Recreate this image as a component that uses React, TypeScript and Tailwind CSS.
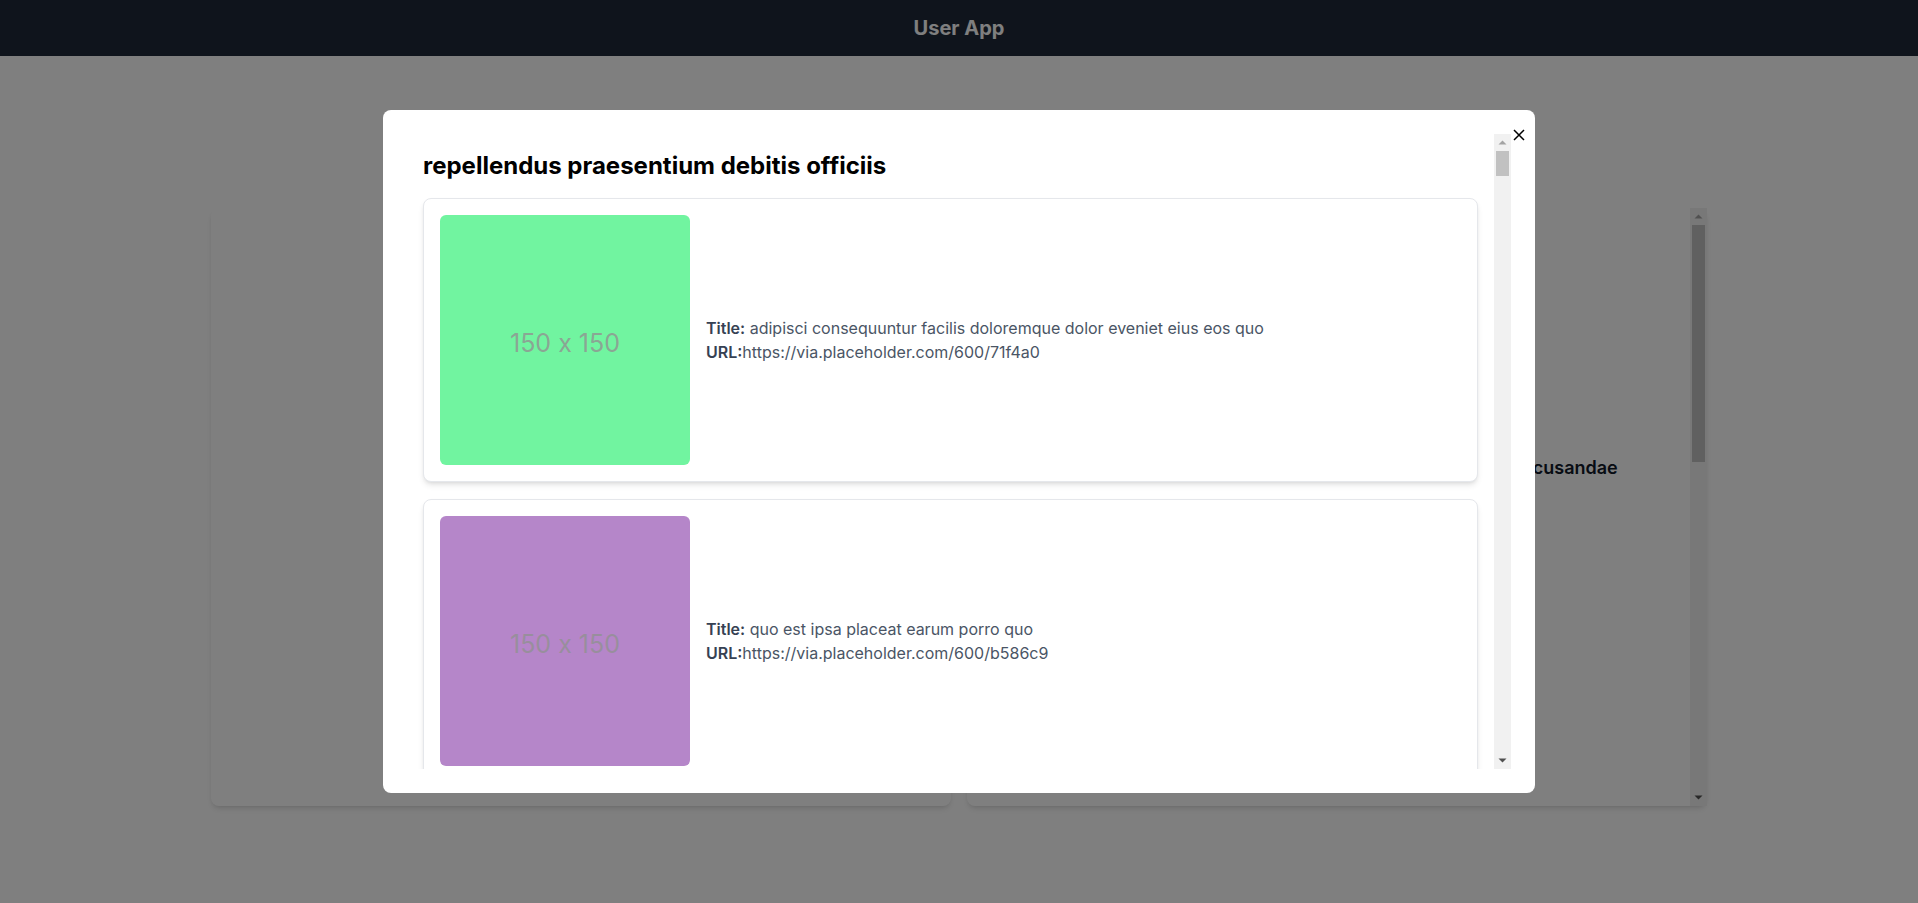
import React from 'react'

type Photo = { title: string; color: string }

const firstPhotos: Photo[] = [
  { title: 'adipisci consequuntur facilis doloremque dolor eveniet eius eos quo', color: '71f4a0' },
  { title: 'quo est ipsa placeat earum porro quo', color: 'b586c9' },
  { title: 'sit voluptatem sit minima veritatis rerum', color: '4f6a85' },
  { title: 'nihil aut dolores dolore quisquam ullam', color: 'd6a1e3' },
  { title: 'ut voluptatem dolores eos et', color: '27d1c0' },
]

const words = [
  'aut', 'rerum', 'voluptas', 'quia', 'omnis', 'dolore', 'natus', 'eius', 'esse', 'magni',
  'odio', 'labore', 'nulla', 'amet', 'velit', 'illum', 'saepe', 'ipsam', 'facere', 'minus',
]

// fill up the album to 50 photos
const photos: Photo[] = Array.from({ length: 50 }, (_, i) => {
  if (i < firstPhotos.length) return firstPhotos[i]
  const n = 3 + (i % 5)
  const title = Array.from({ length: n }, (_, k) => words[(i * 7 + k * 3) % words.length]).join(' ')
  const color = (((i + 1) * 2654435761) >>> 8).toString(16).padStart(6, '0').slice(-6)
  return { title, color }
})

const albums = [
  'quidem molestiae enim',
  'sunt qui excepturi placeat culpa',
  'omnis laborum odio',
  'non esse culpa molestiae omnis sed optio',
  'voluptatem et maxime inventore autem magnam atque recusandae',
  'eaque aut omnis a',
  'natus impedit quibusdam illo est',
  'quibusdam autem aliquid et et quia',
  'qui fuga est a eum',
  'saepe unde necessitatibus rem',
  'distinctio laborum qui',
  'quam nostrum impedit mollitia quod et dolor',
  'consequatur autem doloribus natus',
  'ab rerum non rerum consequatur ut ea',
  'ducimus molestias eos animi atque nihil',
  'ut pariatur rerum ipsum natus',
  'aut minima voluptatem ut velit',
  'nesciunt quia et doloremque',
  'velit pariatur quaerat similique',
  'voluptas rerum iure ut enim',
  'repellendus praesentium debitis officiis',
  'incidunt quisquam hic adipisci sequi',
  'dolores ut et facere placeat',
  'vero maxime id possimus sunt neque et',
  'quibusdam saepe ipsa vel harum',
  'id non nostrum expedita',
  'omnis neque harum quo',
  'ipsa quae voluptas natus ut',
  'est placeat dicta ut nisi rerum',
  'ut non illum sapiente',
  'consequatur eum totam',
]

// classic scrollbar look (thumb at the top, nothing scrolled yet)
function ScrollBar({ thumb }: { thumb: string }) {
  return (
    <div className="w-[17px] shrink-0 bg-[#f1f1f1] flex flex-col">
      <div className="h-[17px] shrink-0 flex items-center justify-center">
        <svg width="17" height="17" viewBox="0 0 17 17">
          <polygon points="4.5,10.5 12.5,10.5 8.5,6.5" fill="#a3a3a3" />
        </svg>
      </div>
      <div className="flex-1 px-[2px]">
        <div className={`${thumb} bg-[#c1c1c1]`} />
      </div>
      <div className="h-[17px] shrink-0 flex items-center justify-center">
        <svg width="17" height="17" viewBox="0 0 17 17">
          <polygon points="4.5,6.5 12.5,6.5 8.5,10.5" fill="#505050" />
        </svg>
      </div>
    </div>
  )
}

function Placeholder({ color }: { color: string }) {
  return (
    <div
      className="w-[250px] h-[250px] shrink-0 rounded-md flex items-center justify-center pt-2"
      style={{ backgroundColor: `#${color}` }}
    >
      <span className="text-[25px] text-[rgba(145,145,145,0.8)] [font-feature-settings:'calt'_0]">150 x 150</span>
    </div>
  )
}

function PhotoCard({ photo }: { photo: Photo }) {
  return (
    <div className="flex items-center gap-4 p-4 bg-white border border-gray-200 rounded-lg shadow-md">
      <Placeholder color={photo.color} />
      <div className="text-base text-gray-600">
        <p>
          <strong className="font-semibold text-gray-700">Title:</strong> {photo.title}
        </p>
        <p>
          <strong className="font-semibold text-gray-700">URL:</strong>https://via.placeholder.com/600/{photo.color}
        </p>
      </div>
    </div>
  )
}

export default function App() {
  return (
    <div className="min-h-screen bg-white font-['Inter',sans-serif]">
      {/* Header */}
      <header className="h-14 bg-gray-800 flex items-center justify-center">
        <h1 className="text-xl font-bold text-white">User App</h1>
      </header>

      {/* Page content */}
      <main className="pt-[152px]">
        <div className="w-[1496px] mx-auto grid grid-cols-2 gap-4">
          <div className="h-[598px] bg-white rounded-lg shadow-md flex flex-col items-center justify-center text-center p-6">
            <h2 className="text-2xl font-bold text-gray-900">Clementina DuBuque</h2>
            <p className="text-gray-600 mt-2">Moriah.Stanton</p>
            <p className="text-gray-600">Rey.Padberg@karina.biz</p>
          </div>
          <div className="h-[598px] bg-white rounded-lg shadow-md flex">
            <div className="flex-1 overflow-hidden p-6 text-center">
              <h2 className="text-2xl font-bold text-gray-900 mb-1.5">Albums</h2>
              {albums.map((a) => (
                <div key={a} className="py-2 text-lg font-semibold text-gray-900 whitespace-nowrap">
                  {a}
                </div>
              ))}
            </div>
            <ScrollBar thumb="h-[237px]" />
          </div>
        </div>
      </main>

      {/* Modal */}
      <div className="fixed inset-0 bg-black/50 flex items-center justify-center">
        <div className="relative w-[1152px] bg-white rounded-lg p-6">
          <button className="absolute top-[19px] right-[10px] text-black">
            <svg width="12" height="12" viewBox="0 0 12 12" fill="none" stroke="currentColor" strokeWidth="1.5">
              <path d="M1 1L11 11M11 1L1 11" />
            </svg>
          </button>
          <div className="h-[635px] flex">
            <div className="flex-1 overflow-hidden px-4 pt-4">
              <h2 className="text-2xl font-bold text-black mb-4">repellendus praesentium debitis officiis</h2>
              <div className="flex flex-col gap-[17px]">
                {photos.map((p, i) => (
                  <PhotoCard key={i} photo={p} />
                ))}
              </div>
            </div>
            <ScrollBar thumb="h-[25px]" />
          </div>
        </div>
      </div>
    </div>
  )
}
